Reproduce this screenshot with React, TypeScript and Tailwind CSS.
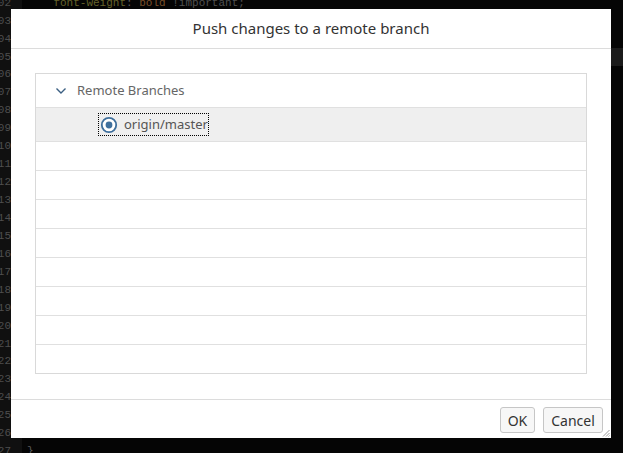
import React from 'react';

const code: { n: number; parts: [string, string][] }[] = [
  { n: 302, parts: [['    font-weight', 'p'], [': ', 'x'], ['bold', 'v'], [' !important;', 'i']] },
  { n: 303, parts: [['}', 'x']] },
  { n: 304, parts: [['', 'x']] },
  { n: 305, parts: [['.sapMList .sapMLIB', 'p'], [' {', 'x']] },
  { n: 306, parts: [['    color', 'p'], [': ', 'x'], ['#333', 'v'], [';', 'x']] },
  { n: 307, parts: [['}', 'x']] },
  { n: 308, parts: [['', 'x']] },
  { n: 309, parts: [['.sapMDialog', 'p'], [' {', 'x']] },
  { n: 310, parts: [['    border', 'p'], [': ', 'x'], ['none', 'v'], [';', 'x']] },
  { n: 311, parts: [['}', 'x']] },
  { n: 312, parts: [['', 'x']] },
  { n: 313, parts: [['.sapMBtn', 'p'], [' {', 'x']] },
  { n: 314, parts: [['    height', 'p'], [': ', 'x'], ['26px', 'v'], [';', 'x']] },
  { n: 315, parts: [['}', 'x']] },
  { n: 316, parts: [['', 'x']] },
  { n: 317, parts: [['.sapMRb', 'p'], [' {', 'x']] },
  { n: 318, parts: [['    color', 'p'], [': ', 'x'], ['#346187', 'v'], [';', 'x']] },
  { n: 319, parts: [['}', 'x']] },
  { n: 320, parts: [['', 'x']] },
  { n: 321, parts: [['.sapMLIBSelected', 'p'], [' {', 'x']] },
  { n: 322, parts: [['    color', 'p'], [': ', 'x'], ['#333', 'v'], [';', 'x']] },
  { n: 323, parts: [['}', 'x']] },
  { n: 324, parts: [['', 'x']] },
  { n: 325, parts: [['.sapMLIBSelected', 'p'], [' {', 'x']] },
  { n: 326, parts: [['    background-color', 'p'], [': ', 'x'], ['#efefef', 'v'], [' !important;', 'i']] },
  { n: 327, parts: [['}', 'x']] },
];

const tone: Record<string, string> = {
  p: 'text-[#65622a]',
  v: 'text-[#7a4f2a]',
  i: 'text-[#505050]',
  x: 'text-[#5a5a5a]',
};

function Editor() {
  return (
    <div className="flex flex-col -mt-[6px] font-['Liberation_Mono',monospace] text-[11px]">
      {code.map((line) => (
        <div
          key={line.n}
          className={`flex h-[17.95px] items-center ${line.n === 305 ? 'bg-[#1b1b1b]' : ''}`}
        >
          <div className="w-[22px] shrink-0 h-full flex items-center justify-end pr-[11px] bg-[#101010] text-[#4e4e4e] whitespace-pre">
            {line.n}
          </div>
          <div className="pl-[5px] whitespace-pre">
            {line.parts.map(([t, k], i) => (
              <span key={i} className={tone[k]}>
                {t}
              </span>
            ))}
          </div>
        </div>
      ))}
    </div>
  );
}

function Radio() {
  return (
    <svg width="18" height="18" viewBox="0 0 18 18">
      <circle cx="9" cy="9" r="7.2" fill="white" stroke="#3f6f9c" strokeWidth="1.8" />
      <circle cx="9" cy="9" r="3.4" fill="#3f6f9c" />
    </svg>
  );
}

function PushDialog() {
  return (
    <div className="absolute left-[11px] top-[9px] w-[600px] h-[429px] bg-white flex flex-col font-['Noto_Sans',sans-serif]">
      <div className="h-[40px] shrink-0 border-b border-[#dcdcdc] flex items-center justify-center text-[15px] text-[#333]">
        Push changes to a remote branch
      </div>
      <div className="flex-1 px-[24px] pt-[24px]">
        <div className="border border-[#d9d9d9] flex flex-col">
          <div className="h-[34px] border-b border-[#e0e0e0] flex items-center pl-[19px] text-[13px] text-[#666]">
            <svg width="12" height="8" viewBox="0 0 12 8" className="mr-[10px]">
              <polyline points="1.5,1.5 6,6 10.5,1.5" fill="none" stroke="#3b5f82" strokeWidth="1.4" />
            </svg>
            Remote Branches
          </div>
          <div className="h-[34px] border-b border-[#e0e0e0] bg-[#efefef] flex items-center pl-[63px]">
            <div className="flex items-center gap-[6px] h-[21px] pl-[1px] outline-1 outline-dotted outline-black text-[13px] text-[#555]">
              <Radio />
              <span>origin/master</span>
            </div>
          </div>
          {[0, 1, 2, 3, 4, 5, 6].map((i) => (
            <div key={i} className="h-[29px] border-b border-[#e0e0e0]" />
          ))}
          <div className="h-[28px]" />
        </div>
      </div>
      <div className="h-[39px] shrink-0 border-t border-[#dcdcdc] flex justify-end items-start pt-[7px] pr-[8px] gap-[8px]">
        <button className="w-[35px] h-[26px] rounded-[3px] border border-[#c6c6c6] bg-[#f7f7f7] text-[14px] text-[#333] flex items-center justify-center">
          OK
        </button>
        <button className="w-[60px] h-[26px] rounded-[3px] border border-[#c6c6c6] bg-[#f7f7f7] text-[14px] text-[#333] flex items-center justify-center">
          Cancel
        </button>
      </div>
      <svg width="8" height="8" viewBox="0 0 8 8" className="absolute right-[1px] bottom-[1px]">
        <line x1="7.5" y1="1" x2="1" y2="7.5" stroke="#9a9a9a" strokeWidth="1" />
        <line x1="7.5" y1="4" x2="4" y2="7.5" stroke="#9a9a9a" strokeWidth="1" />
        <line x1="7.5" y1="6.5" x2="6.5" y2="7.5" stroke="#9a9a9a" strokeWidth="1" />
      </svg>
    </div>
  );
}

export default function App() {
  return (
    <div className="relative w-[623px] h-[453px] overflow-hidden bg-[#050505]">
      <Editor />
      <PushDialog />
    </div>
  );
}
